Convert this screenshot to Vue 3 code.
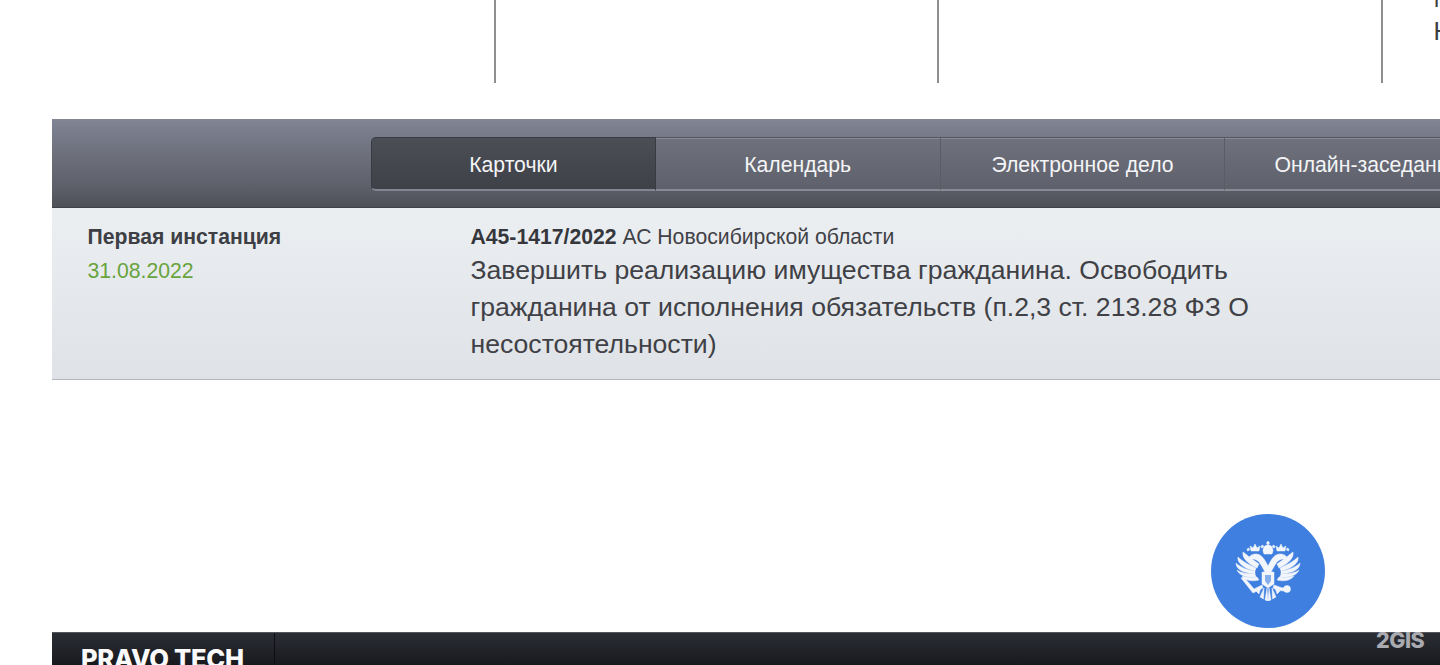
<script setup>
const columns = [{ id: 1 }, { id: 2 }, { id: 3 }]
const tabs = [
  { label: 'Карточки', active: true },
  { label: 'Календарь' },
  { label: 'Электронное дело' },
  { label: 'Онлайн-заседания' }
]
const feathers = [
  'M24 23C18 19 12 14 8 11C7 16 11 22 22 27Z',
  'M21 27C14 24 7 20 3 16C2 21 7 27 20 30Z',
  'M20 30C12 29 5 26 1 22C1 27 6 32 20 33Z',
  'M20 33C13 33 6 32 2 29C4 34 11 37 21 36Z',
  'M22 36C16 37 11 36 7 35C10 39 16 41 24 39Z'
]
</script>

<template>
  <div class="page">
    <section class="top">
      <div v-for="c in columns" :key="c.id" class="col"></div>
      <div class="col last">
        <p>М<br />Н</p>
      </div>
    </section>

    <section class="card">
      <nav class="bar">
        <div class="tabs">
          <div v-for="t in tabs" :key="t.label" class="tab" :class="{ active: t.active }">{{ t.label }}</div>
        </div>
      </nav>
      <div class="body">
        <div class="stage">
          <div class="stage-name">Первая инстанция</div>
          <div class="stage-date">31.08.2022</div>
        </div>
        <div class="info">
          <div class="case"><b>А45-1417/2022</b> АС Новосибирской области</div>
          <div class="result">Завершить реализацию имущества гражданина. Освободить гражданина от исполнения обязательств (п.2,3 ст. 213.28 ФЗ О несостоятельности)</div>
        </div>
      </div>
    </section>

    <footer class="footer">
      <div class="brand">PRAVO TECH</div>
    </footer>

    <div class="badge">
      <svg width="66" height="60" viewBox="0 0 66 60">
        <g fill="#f2f5fa" stroke="#f2f5fa" stroke-width="0.5">
          <g v-for="side in [1, -1]" :key="side" :transform="side === 1 ? '' : 'translate(66 0) scale(-1 1)'">
            <path v-for="(d, i) in feathers" :key="i" :d="d" />
            <path d="M33 37C30 31 27 25 24 21C21 18 17 17 13 19C14 15 17 13 21 13C26 13 29 17 33 25Z" />
            <path d="M16 10L15 5L18 7L20 3L22 7L25 5L24 10Z" />
            <path d="M12 8l2-1 .5 2-2 1zM26 5l2-1 .5 2-2 1z" />
            <path d="M32 47L33 60L30 59ZM29 47L28.500 58L25 56ZM26 46L24 53L21 50Z" />
          </g>
          <path d="M33 0l1.600 2L33 4l-1.600-2zM28 10c0-4 2-6 5-6s5 2 5 6l-1 3h-8z" />
          <path d="M27 31H39V43L33 47L27 43Z" />
          <circle cx="52" cy="48" r="3.500" />
          <path d="M39 44C43 45 46 47 49 47L49 50C45 50 41 49 38 47Z" />
          <path d="M6 37L9 36L19 48L27 44L28 47L18 52Z" />
        </g>
        <path d="M30 34h6v6l-3 4-3-4z" fill="#3e7fe0" opacity=".6" />
      </svg>
    </div>
    <div class="watermark">2GIS</div>
  </div>
</template>

<style scoped>
.page {
  position: relative;
  width: 1440px;
  height: 665px;
  overflow: hidden;
  background: #fff;
  font-family: "Liberation Sans", Arial, sans-serif;
}
.top {
  display: flex;
  height: 83px;
  margin-bottom: 36px;
  padding-left: 52px;
}
.col {
  flex: 0 0 443.500px;
  border-right: 2px solid #8f8f91;
  box-sizing: border-box;
}
.col.last {
  border: 0;
  padding-left: 51px;
}
.col p {
  margin: -18px 0 0;
  font-size: 25px;
  line-height: 33px;
  color: #3d3d3f;
}
.card {
  margin-left: 52px;
  width: 1500px;
}
.bar {
  box-sizing: border-box;
  height: 89px;
  padding: 18px 0 16px 319px;
  background: linear-gradient(#838693 0, #7b8090 10%, #70727e 35%, #5e606b 75%, #4f5159 100%);
  border-bottom: 1px solid #3f4147;
}
.tabs {
  display: flex;
  height: 54px;
  width: 1180px;
}
.tab {
  flex: 0 0 284.800px;
  box-sizing: border-box;
  display: flex;
  align-items: center;
  justify-content: center;
  padding-top: 2px;
  color: #f4f5f7;
  font-size: 21.200px;
  background: linear-gradient(#6f717c, #5e606b);
  border-top: 1px solid #55575f;
  border-bottom: 2px solid #888a94;
  box-shadow: inset 0 1px 0 #8a8c97;
  border-right: 1px solid #5a5c66;
  position: relative;
}
.tab::after {
  content: "";
  position: absolute;
  top: 1px;
  bottom: 0;
  right: -2px;
  width: 1px;
  background: #8d8f99;
}
.tab.active {
  background: linear-gradient(#4c4e56, #3f4149);
  border: 1px solid #393b41;
  border-bottom: 2px solid #83858f;
  border-radius: 5px 0 0 5px;
  box-shadow: none;
}
.body {
  box-sizing: border-box;
  height: 172px;
  display: flex;
  padding: 16px 0 0 35.500px;
  background: linear-gradient(#eceff2, #dfe2e6);
  border-bottom: 1px solid #b5b7bb;
}
.stage {
  flex: 0 0 383px;
  font-size: 21.200px;
  line-height: 26px;
}
.stage-name {
  font-weight: 700;
  color: #3d3f45;
}
.stage-date {
  margin-top: 8px;
  color: #68a33d;
}
.info {
  width: 800px;
  color: #3f4146;
}
.case {
  font-size: 21.200px;
  line-height: 26px;
}
.case b {
  color: #35373c;
}
.result {
  margin-top: 2px;
  font-size: 26.600px;
  line-height: 37px;
}
.footer {
  position: absolute;
  left: 52px;
  top: 632px;
  width: 1388px;
  height: 33px;
  background: linear-gradient(#2c2e35, #17191e);
  border-top: 1px solid #55565c;
  box-sizing: border-box;
}
.brand {
  box-sizing: border-box;
  width: 223px;
  height: 100%;
  padding: 13px 0 0 29px;
  border-right: 1px solid #0d0e11;
  color: #fafafa;
  font-family: Inter, "Liberation Sans", sans-serif;
  font-weight: 800;
  font-size: 25.500px;
  line-height: 26px;
  letter-spacing: -0.300px;
  white-space: nowrap;
}
.badge {
  position: absolute;
  left: 1211px;
  top: 514px;
  width: 114px;
  height: 114px;
  border-radius: 50%;
  background: #3e7fe0;
  display: flex;
  align-items: center;
  justify-content: center;
}
.watermark {
  position: absolute;
  left: 1376px;
  top: 628px;
  color: #a9abb0;
  font-family: Inter, "Liberation Sans", sans-serif;
  font-weight: 800;
  font-size: 21.500px;
  line-height: 24px;
  letter-spacing: -0.500px;
}
</style>
